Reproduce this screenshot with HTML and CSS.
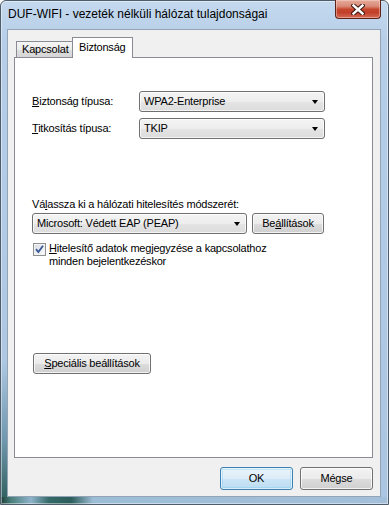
FILE: index.html
```html
<!DOCTYPE html>
<html lang="hu">
<head>
  <meta charset="UTF-8" />
  <title>DUF-WIFI - vezeték nélküli hálózat tulajdonságai</title>
  <link rel="stylesheet" href="styles.css">
</head>
<body>

  <div class="window">
    <!-- Title bar -->
    <div class="titlebar">
      <span class="title">DUF-WIFI - vezeték nélküli hálózat tulajdonságai</span>
      <button class="close-btn" type="button" aria-label="Bezárás">
        <svg width="14" height="11" viewBox="0 0 14 11">
          <path d="M2.5 1.5 L11.5 9.5 M11.5 1.5 L2.5 9.5" stroke="#3b1711" stroke-width="4.4" stroke-linecap="square" fill="none" />
          <path d="M2.5 1.5 L11.5 9.5 M11.5 1.5 L2.5 9.5" stroke="#fff" stroke-width="2.4" stroke-linecap="square" fill="none" />
        </svg>
      </button>
    </div>

    <!-- Client area -->
    <div class="client">
      <div class="tabs">
        <div class="tab">Kapcsolat</div>
        <div class="tab active">Biztonság</div>
      </div>

      <div class="panel">
        <div class="field-row">
          <span class="field-label"><u>B</u>iztonság típusa:</span>
          <div class="combo">WPA2-Enterprise<span class="arrow"></span></div>
        </div>
        <div class="field-row second">
          <span class="field-label"><u>T</u>itkosítás típusa:</span>
          <div class="combo">TKIP<span class="arrow"></span></div>
        </div>

        <div class="method-label">Vá<u>l</u>assza ki a hálózati hitelesítés módszerét:</div>
        <div class="method-row">
          <div class="combo combo-method">Microsoft: Védett EAP (PEAP)<span class="arrow"></span></div>
          <button class="btn btn-settings" type="button">Be<u>á</u>llítások</button>
        </div>

        <div class="check-row">
          <span class="checkbox">
            <svg width="13" height="13" viewBox="0 0 13 13">
              <path d="M3 6.2 L5.4 9 L10 2.8" stroke="#3d5c98" stroke-width="1.9" fill="none" />
            </svg>
          </span>
          <span class="check-text"><u>H</u>itelesítő adatok megjegyzése a kapcsolathoz<br>minden bejelentkezéskor</span>
        </div>

        <button class="btn btn-advanced" type="button"><u>S</u>peciális beállítások</button>
      </div>

      <div class="dialog-buttons">
        <button class="btn btn-default" type="button">OK</button>
        <button class="btn" type="button">Mégse</button>
      </div>
    </div>
  </div>

</body>
</html>
```

FILE: styles.css
```css
* {
  box-sizing: border-box;
}

body {
  margin: 0;
  width: 389px;
  height: 505px;
  overflow: hidden;
  font-family: 'Liberation Sans', Arial, sans-serif;
  font-size: 11px;
  letter-spacing: -0.2px;
  color: #000;
  background: #fff;
}

u {
  text-decoration-thickness: 1px;
  text-underline-offset: 1px;
}

/* Window frame */
.window {
  width: 389px;
  height: 505px;
  display: flex;
  flex-direction: column;
  padding: 0 7px 7px 6px;
  border: 1px solid #4f5c69;
  border-radius: 6px 6px 0 0;
  box-shadow: inset 0 0 0 1px rgba(255, 255, 255, 0.45);
  background:
    linear-gradient(90deg, #1d3f3a 0, #4a7f7b 10px, #8fb3cb 30px, #356a68 48px, #2c5d5a 70px, #9dbdd6 92px, #a3bfda 389px) left bottom / 100% 7px no-repeat,
    linear-gradient(180deg, rgba(0, 0, 0, 0) 360px, #6f97ad 440px, #285a55 505px) left top / 6px 100% no-repeat,
    linear-gradient(180deg, #c4d9ee 0, #b6cee8 40px, #aac5e1 100%);
}

/* Title bar */
.titlebar {
  height: 28px;
  display: flex;
  justify-content: space-between;
  align-items: flex-start;
}

.title {
  font-size: 12px;
  letter-spacing: 0;
  line-height: 14px;
  padding: 6px 0 0 1px;
  color: #000;
}

.close-btn {
  width: 46px;
  height: 19px;
  margin-top: -1px;
  padding: 0;
  border: 1px solid #5e2219;
  border-top: none;
  border-radius: 0 0 4px 4px;
  display: flex;
  align-items: center;
  justify-content: center;
  background: linear-gradient(180deg, #e5ab9c 0, #d98a77 35%, #c6452d 52%, #c2402a 70%, #d56b55 100%);
  box-shadow: inset 0 0 0 1px rgba(255, 220, 210, 0.45);
}

/* Client area */
.client {
  flex: 1;
  display: flex;
  flex-direction: column;
  background: #f0f0f0;
  border: 1px solid #93a4b6;
  padding: 7px 7px 6px 6px;
}

/* Tabs */
.tabs {
  display: flex;
  align-items: flex-end;
  height: 21px;
  padding-left: 2px;
  margin-bottom: -1px;
}

.tab {
  width: 57px;
  height: 17px;
  padding: 1px 0 0 5px;
  line-height: 13px;
  border: 1px solid #898c95;
  border-bottom: none;
  background: linear-gradient(180deg, #f5f5f5 0, #ebebeb 50%, #dedede 51%, #d4d4d4 100%);
}

.tab.active {
  width: 61px;
  height: 21px;
  margin-left: -1px;
  padding: 3px 0 0 6px;
  background: #fff;
  position: relative;
  z-index: 1;
}

/* Tab page */
.panel {
  flex: 1;
  border: 1px solid #898c95;
  background: #fff;
  padding: 33px 0 0 17px;
}

.field-row {
  display: flex;
  align-items: center;
  height: 21px;
}

.field-row.second {
  margin-top: 6px;
}

.field-label {
  width: 107px;
  line-height: 13px;
}

.combo {
  width: 186px;
  height: 21px;
  display: flex;
  align-items: center;
  justify-content: space-between;
  padding: 0 6px 0 4px;
  border: 1px solid #707070;
  border-radius: 3px;
  line-height: 13px;
  background: linear-gradient(180deg, #f4f4f4 0, #ededed 50%, #e4e4e4 51%, #dcdcdc 100%);
  box-shadow: inset 0 0 0 1px rgba(255, 255, 255, 0.7);
}

.arrow {
  width: 0;
  height: 0;
  border-left: 3.5px solid transparent;
  border-right: 3.5px solid transparent;
  border-top: 4px solid #000;
}

.method-label {
  margin-top: 59px;
  line-height: 13px;
}

.method-row {
  display: flex;
  margin-top: 2px;
}

.combo-method {
  width: 215px;
}

/* Buttons */
.btn {
  font-family: inherit;
  font-size: 11px;
  letter-spacing: -0.2px;
  color: #000;
  padding: 0;
  line-height: 13px;
  border: 1px solid #707070;
  border-radius: 3px;
  background: linear-gradient(180deg, #f3f3f3 0, #ebebeb 50%, #dddddd 51%, #cfcfcf 100%);
  box-shadow: inset 0 0 0 1px rgba(255, 255, 255, 0.75);
}

.btn-settings {
  width: 72px;
  height: 21px;
  margin-left: 5px;
}

.btn-advanced {
  width: 118px;
  height: 21px;
  margin: 85px 0 0 1px;
}

/* Checkbox */
.check-row {
  display: flex;
  align-items: flex-start;
  margin-top: 8px;
}

.checkbox {
  width: 13px;
  height: 13px;
  margin: 1px 3px 0 1px;
  border: 1px solid #8e8f8f;
  background: linear-gradient(135deg, #d6dbe3 0, #eef0f4 60%, #fbfbfc 100%);
  box-shadow: inset 0 0 0 1px #f4f4f4;
  display: flex;
}

.checkbox svg {
  margin: -1px;
}

.check-text {
  line-height: 13px;
}

/* Dialog buttons */
.dialog-buttons {
  display: flex;
  justify-content: flex-end;
  gap: 7px;
  margin-top: 9px;
}

.dialog-buttons .btn {
  width: 73px;
  height: 23px;
}

.btn-default {
  border-color: #3c7fb1;
  background: linear-gradient(180deg, #eaf4fb 0, #dcedf9 50%, #cbe5f6 51%, #bcdcf2 100%);
  box-shadow: inset 0 0 0 1px rgba(255, 255, 255, 0.6), inset 0 0 0 2px rgba(120, 200, 240, 0.35);
}
```
